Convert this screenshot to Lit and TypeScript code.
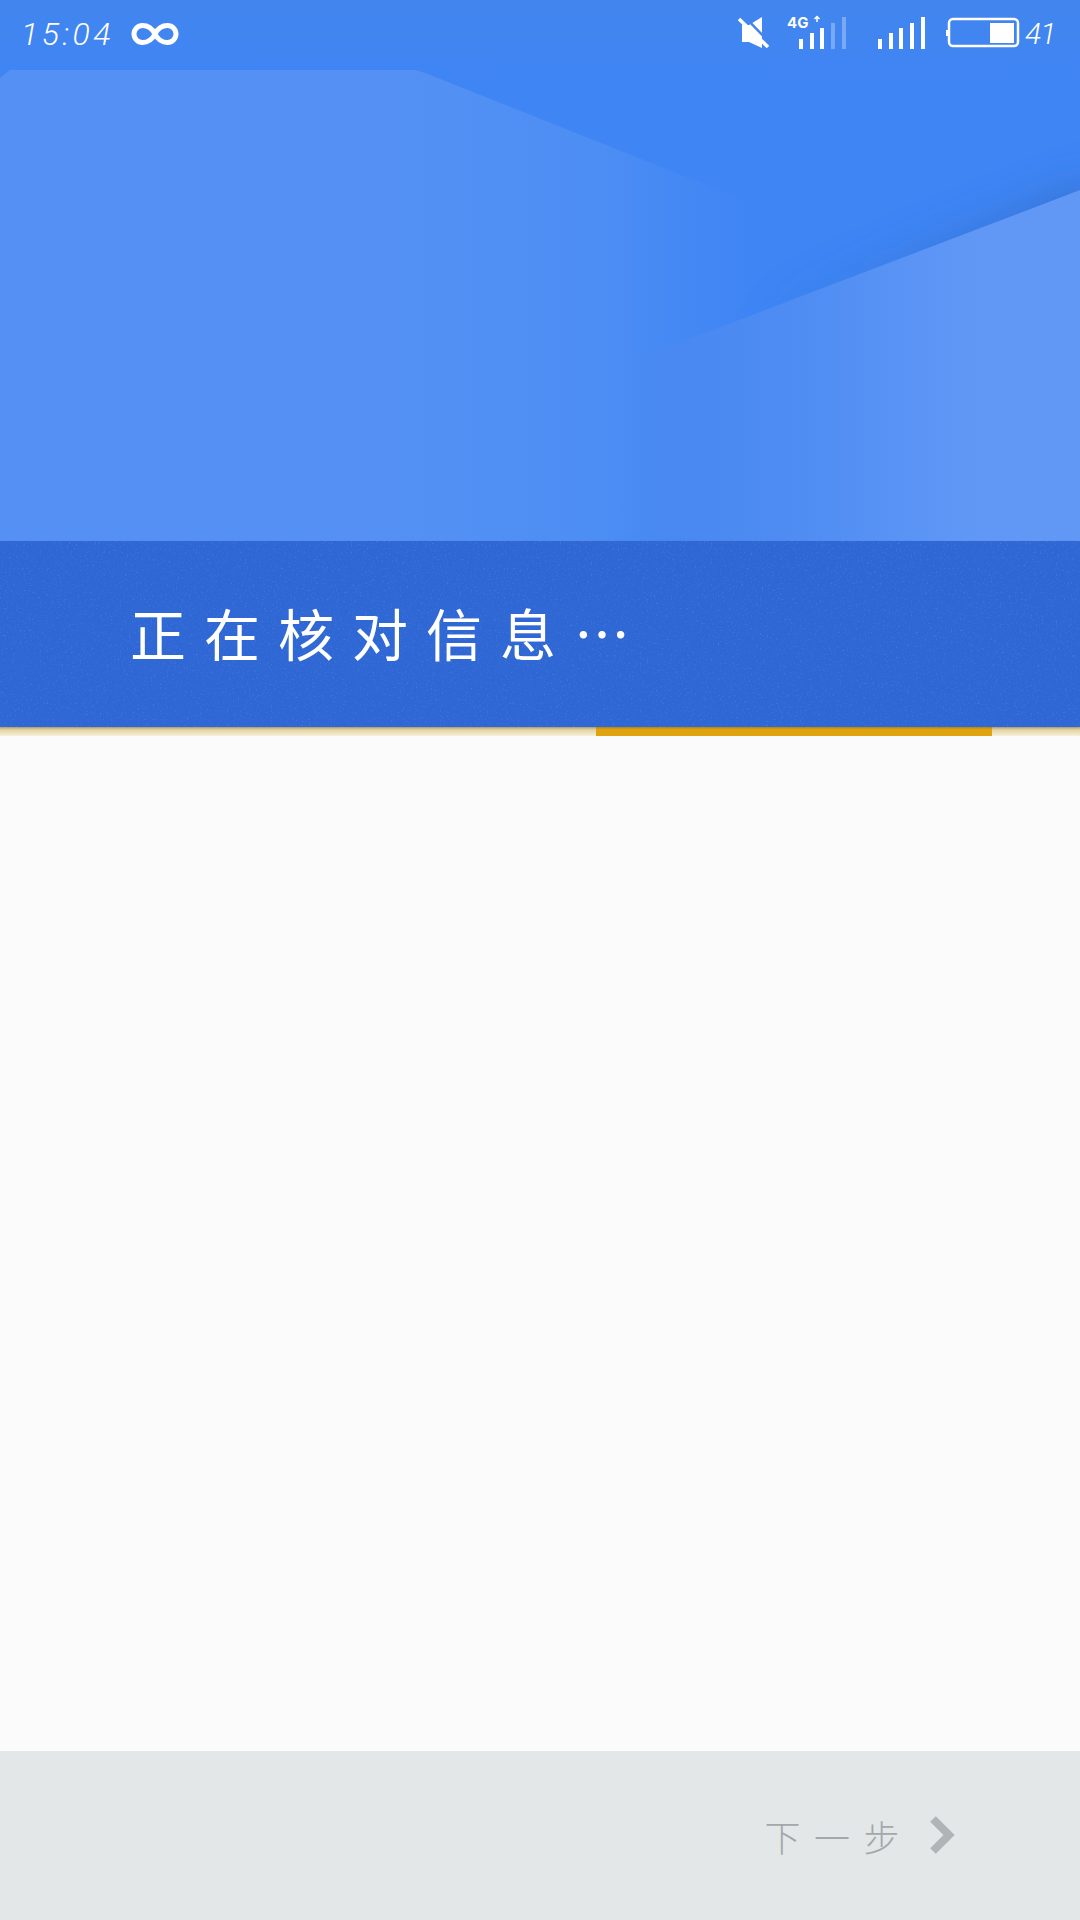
import { LitElement, html, css, svg } from "lit";
import { customElement } from "lit/decorators.js";

@customElement("app-root")
export class AppRoot extends LitElement {
  static styles = css`
    :host { display: block; width: 1080px; height: 1920px; font-family: "Noto Sans CJK SC", "Noto Sans", sans-serif; }
    .page { display: flex; flex-direction: column; height: 1920px; background: #fbfbfb; overflow: hidden; }
    .hero { position: relative; height: 541px; flex: none; background: #3f85f4; }
    .hero-art { position: absolute; inset: 0; width: 1080px; height: 541px; }
    .status { position: relative; height: 70px; display: flex; align-items: flex-start; color: #fff; }
    .time { margin: 14px 0 0 21px; width: 110px; font: italic 300 32px/40px Roboto, sans-serif; letter-spacing: 3.5px; white-space: nowrap; }
    .inf { margin-top: 20px; width: 48px; height: 28px; }
    .spacer { flex: 1; }
    .mute { margin: 16px 15px 0 0; width: 34px; height: 34px; }
    .net1 { margin: 14px 31px 0 0; width: 60px; height: 38px; position: relative; }
    .tag { position: absolute; left: 0; top: 1px; font: 700 15px/15px Inter, sans-serif; color: #fff; }
    .net1 svg { display: block; }
    .net2 { margin: 14px 20px 0 0; width: 48px; height: 38px; }
    .batt { margin: 16px 5px 0 0; width: 74px; height: 34px; }
    .lvl { margin: 14px 27px 0 0; width: 28px; font: italic 300 30px/40px Roboto, sans-serif; letter-spacing: -1px; white-space: nowrap; }
    .band { position: relative; height: 186px; flex: none; background: #2f67d4; display: flex; align-items: center; padding-left: 130px; box-sizing: border-box; box-shadow: 0 1px 2px rgba(60,60,40,.35); z-index: 1; }
    .noise { position: absolute; inset: 0; width: 1080px; height: 186px; }
    .msg { position: relative; top: -2px; font-size: 56px; font-weight: 400; line-height: 70px; letter-spacing: 18px; color: #fff; white-space: nowrap; }
    .track { height: 9px; flex: none; padding-left: 596px; background: linear-gradient(#d9c48a, #ecdfb8 60%, #f6f0dc); }
    .bar { width: 396px; height: 9px; background: #e0a30f; }
    .body { flex: 1; }
    .foot { height: 169px; flex: none; background: #e3e7e8; display: flex; align-items: center; justify-content: flex-end; padding-right: 124px; box-sizing: border-box; }
    .next { font-size: 36px; font-weight: 300; letter-spacing: 13.5px; color: #a3a8aa; line-height: 50px; margin-right: 15px; position: relative; white-space: nowrap; }
    .chev { width: 28px; height: 40px; position: relative; top: -1px; }
  `;

  private bars(xs: number[], h: number[], faded: number) {
    return xs.map((x, i) => svg`<rect x=${x} y=${35 - h[i]} width="4" height=${h[i]} fill="#fff" opacity=${i >= xs.length - faded ? 0.3 : 1} />`);
  }

  render() {
    return html`<div class="page">
      <div class="hero">
        <svg class="hero-art" viewBox="0 0 1080 541">
          <defs>
            <linearGradient id="top" x1="0" y1="0" x2="0" y2="1"><stop offset="0" stop-color="#4285ee"/><stop offset="1" stop-color="#3f85f4"/></linearGradient>
            <linearGradient id="l" gradientUnits="userSpaceOnUse" x1="380" y1="0" x2="750" y2="0">
              <stop offset="0" stop-color="#5591f4"/><stop offset=".6" stop-color="#5090f4" stop-opacity=".8"/><stop offset="1" stop-color="#4b8cf3" stop-opacity="0"/>
            </linearGradient>
            <linearGradient id="r" gradientUnits="userSpaceOnUse" x1="620" y1="0" x2="980" y2="0">
              <stop offset="0" stop-color="#4a88f0" stop-opacity="0"/><stop offset=".14" stop-color="#4a88f0" stop-opacity=".85"/><stop offset=".5" stop-color="#4f8df3"/><stop offset="1" stop-color="#6198f6"/>
            </linearGradient>
            <linearGradient id="sh" gradientUnits="userSpaceOnUse" x1="760" y1="0" x2="1080" y2="0">
              <stop offset="0" stop-color="#2d64bd" stop-opacity="0"/><stop offset="1" stop-color="#2d64bd" stop-opacity=".7"/>
            </linearGradient>
            <filter id="blur" x="-20%" y="-30%" width="140%" height="160%"><feGaussianBlur stdDeviation="20"/></filter>
          </defs>
          <rect width="1080" height="80" fill="url(#top)"/>
          <polygon points="0,78 10,70 415,70 425,73 820,230 820,541 0,541" fill="url(#l)"/>
          <polygon points="1100,182 634,360 1100,400" fill="url(#sh)" filter="url(#blur)"/>
          <polygon points="1080,190 634,360 620,370 620,541 1080,541" fill="url(#r)"/>
        </svg>
        <div class="status">
          <span class="time">15:04</span>
          <svg class="inf" viewBox="0 0 48 28"><path d="M24 14C21.500 9 17 5.500 11.500 5.500a8.500 8.500 0 0 0 0 17C17 22.500 21.500 19 24 14C26.500 9 31 5.500 36.500 5.500a8.500 8.500 0 0 1 0 17C31 22.500 26.500 19 24 14Z" fill="none" stroke="#fff" stroke-width="5"/></svg>
          <span class="spacer"></span>
          <svg class="mute" viewBox="0 0 34 34">
            <path d="M4 9h7L24 1v31L11 26H4Z" fill="#fff"/>
            <path d="M3 1 32 31" stroke="#4285ee" stroke-width="2.500" transform="translate(2 -2)"/>
            <path d="M1 3 30 31" stroke="#fff" stroke-width="3.500"/>
          </svg>
          <div class="net1">
            <span class="tag">4G</span>
            <svg width="60" height="38" viewBox="0 0 60 38">
              ${this.bars([0, 11, 21, 32, 43].map((x) => x + 12), [10, 16, 21, 26, 32], 2)}
              <path d="M30 8V3M27.500 5 30 2.500 32.500 5" stroke="#fff" stroke-width="1.500" fill="none"/>
            </svg>
          </div>
          <svg class="net2" viewBox="0 0 48 38">${this.bars([0, 11, 21, 32, 43], [10, 16, 21, 26, 32], 0)}</svg>
          <svg class="batt" viewBox="0 0 74 34">
            <rect x="3" y="3" width="69" height="27" rx="4" fill="none" stroke="#fff" stroke-width="2.500"/>
            <rect x="0" y="14" width="2.500" height="6" fill="#fff"/>
            <rect x="44" y="7" width="24" height="20" fill="#fff"/>
          </svg>
          <span class="lvl">41</span>
        </div>
      </div>
      <div class="band">
        <svg class="noise" viewBox="0 0 1080 186">
          <filter id="n"><feTurbulence type="fractalNoise" baseFrequency=".55" numOctaves="2" seed="4"/><feColorMatrix values="0 0 0 0 .55  0 0 0 0 .7  0 0 0 0 1  0 0 0 1.600 -.95"/></filter>
          <rect width="1080" height="186" filter="url(#n)" opacity=".35"/>
        </svg>
        <span class="msg">正在核对信息…</span>
      </div>
      <div class="track"><div class="bar"></div></div>
      <div class="body"></div>
      <div class="foot">
        <span class="next">下一步</span>
        <svg class="chev" viewBox="0 0 28 40"><path d="M5 4 21 20 5 36" fill="none" stroke="#b0b4b6" stroke-width="8"/></svg>
      </div>
    </div>`;
  }
}
